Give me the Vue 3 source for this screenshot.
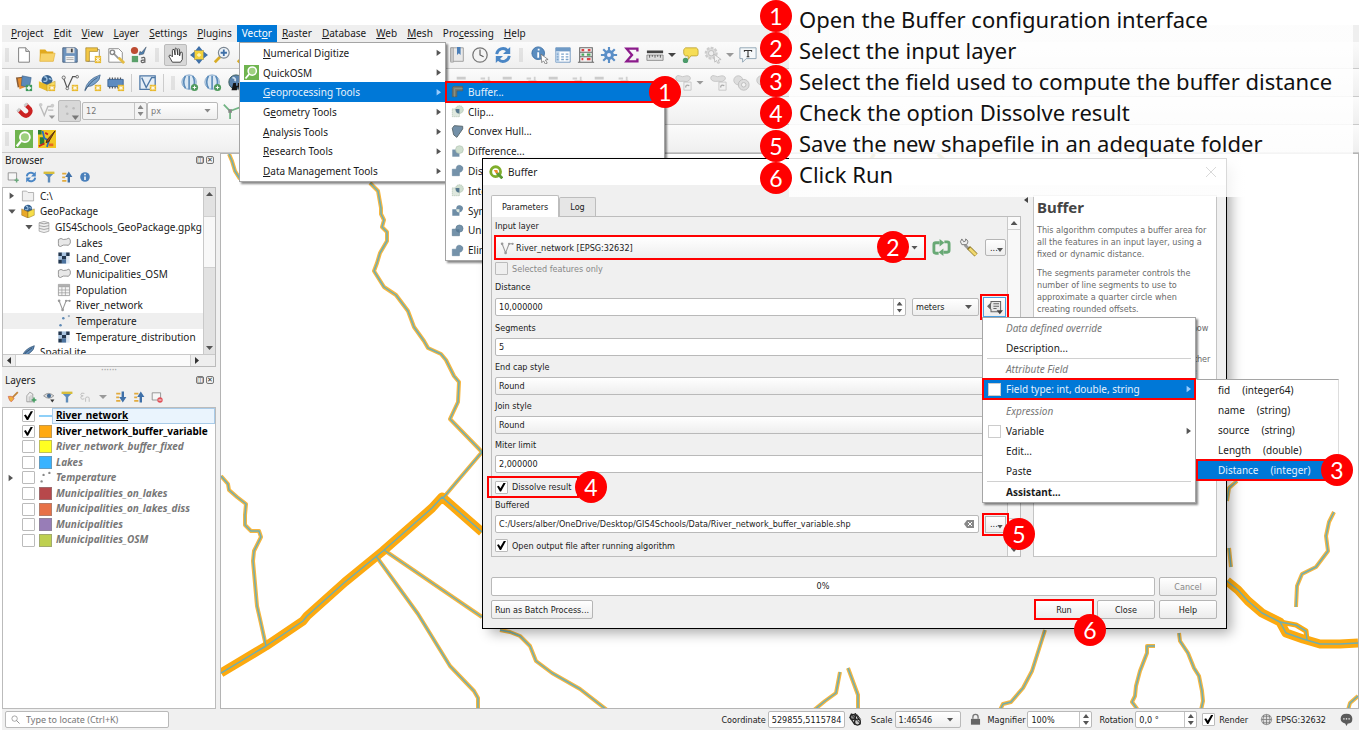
<script setup>
import { ref } from 'vue'

const menus = ['Project', 'Edit', 'View', 'Layer', 'Settings', 'Plugins', 'Vector', 'Raster', 'Database', 'Web', 'Mesh', 'Processing', 'Help']
const keyAt = { Vector: 4, Processing: 3 }
const split = (t, i = 0) => [t.slice(0, i), t[i], t.slice(i + 1)]

const vectorMenu = [
  { t: 'Numerical Digitize' },
  { t: 'QuickOSM', icon: 'osm', k: -1 },
  { t: 'Geoprocessing Tools', on: true },
  { t: 'Geometry Tools', k: 1 },
  { t: 'Analysis Tools' },
  { t: 'Research Tools' },
  { t: 'Data Management Tools' },
]
const geoMenu = [
  ['Buffer...', 'buffer'], ['Clip...', 'clip'], ['Convex Hull...', 'hull'], ['Difference...', 'diff'], ['Dissolve...', 'dissolve'],
  ['Intersection...', 'clip'], ['Symmetrical Difference...', 'sym'], ['Union...', 'union'], ['Eliminate Selected Polygons...', 'dissolve'],
]

const fileTools = ['new', 'open', 'save', 'layout', 'layoutmgr', 'style']
const sourceTools = ['addlayer', 'geopkg', 'newshape', 'feather', 'chip']
const attrTools = ['identify', 'table', 'abacus', 'gear', 'sigma']

const tree = [
  { t: 'C:\\', icon: 'folder', lvl: 0, a: 'r' },
  { t: 'GeoPackage', icon: 'geopkgs', lvl: 0, a: 'd' },
  { t: 'GIS4Schools_GeoPackage.gpkg', icon: 'db', lvl: 1, a: 'd' },
  { t: 'Lakes', icon: 'poly', lvl: 2 },
  { t: 'Land_Cover', icon: 'rasterl', lvl: 2 },
  { t: 'Municipalities_OSM', icon: 'poly', lvl: 2 },
  { t: 'Population', icon: 'tbl', lvl: 2 },
  { t: 'River_network', icon: 'line', lvl: 2 },
  { t: 'Temperature', icon: 'points', lvl: 2, on: true },
  { t: 'Temperature_distribution', icon: 'rasterl', lvl: 2 },
  { t: 'SpatiaLite', icon: 'quill', lvl: 0 },
]

const layers = ref([
  { t: 'River_network', sw: 'river', on: true, cur: true },
  { t: 'River_network_buffer_variable', sw: 'c1', on: true },
  { t: 'River_network_buffer_fixed', sw: 'c2' },
  { t: 'Lakes', sw: 'c3' },
  { t: 'Temperature', sw: 'pts', exp: true },
  { t: 'Municipalities_on_lakes', sw: 'c4' },
  { t: 'Municipalities_on_lakes_diss', sw: 'c5' },
  { t: 'Municipalities', sw: 'c6' },
  { t: 'Municipalities_OSM', sw: 'c7' },
])

const steps = [
  'Open the Buffer configuration interface',
  'Select the input layer',
  'Select the field used to compute the buffer distance',
  'Check the option Dissolve result',
  'Save the new shapefile in an adequate folder',
  'Click Run',
]
const fields = [['fid', 'integer64'], ['name', 'string'], ['source', 'string'], ['Length', 'double'], ['Distance', 'integer']]

const thin = [
  '229,153 232,160 235,170 240,178',
  '370,182 378,190 381,207 381,213 384,219 382,226 387,231 387,240 380,252 377,262 374,270 384,286 396,294 408,310 414,326 424,340 428,347 441,353 446,359 454,375 459,381 458,401 450,418 482,451 443,497',
  '384,549 482,616',
  '376,555 418,613 450,665 474,690 478,697 478,709',
  '221,475 228,483 229,489 237,496 246,503 245,514 245,524 251,530 259,530 261,536 254,550 253,560 257,605 260,618 266,645',
  '500,629 510,631 520,635 530,645 536,660 552,672 580,688 607,709',
  '840,671 836,692 825,700 814,709',
  '848,667 858,694 858,709',
  '1045,629 1032,670 1023,687 1011,701 1003,703 1000,709',
  '1155,645 1147,645 1147,652 1140,670 1136,685 1135,695 1132,701 1138,709',
  '1179,632 1180,640 1188,652 1194,667 1199,675 1202,690 1203,700 1201,709',
  '1358,695 1350,702 1348,709',
  '1227,500 1229,487 1237,480',
  '1229,547 1231,566',
  '1334,511 1329,521 1326,535 1328,550 1316,566 1302,573 1297,585 1296,606',
  '874,153 870,160',
  '938,153 944,159',
  '1144,153 1138,160',
]
const thick = [
  '221,672 266,645 303,620 307,615 345,581 383,550 432,507 442,496 482,531',
  '1227,580 1238,589 1248,600 1262,612 1280,621 1286,632 1303,638 1320,643 1340,643 1358,642',
]
const loop = '1280,621 1296,624 1306,630 1307,639'
const selected = ref(false)
const dissolve = ref(true)
const openAfter = ref(true)
const render = ref(true)
</script>

<template>
  <div class="desk">
    <svg class="defs" aria-hidden="true">
      <symbol id="new" viewBox="0 0 20 20"><path d="M4 2h8l4 4v12H4z" fill="#fff" stroke="#777" /><path d="M12 2v4h4" fill="#ddd" stroke="#777" /></symbol>
      <symbol id="open" viewBox="0 0 20 20"><path d="M2 4h6l2 2h7v11H2z" fill="#e2aa1e" /><path d="M3 8h16l-2 9H2z" fill="#f7d36a" stroke="#e0ac2c" stroke-width=".6" /></symbol>
      <symbol id="save" viewBox="0 0 20 20"><path d="M2 2h14l2 2v14H2z" fill="#6d93bd" stroke="#49607c" /><path d="M6 2h9v6H6z" fill="#ddd" /><path d="M11 3h2v4h-2z" fill="#444" /><path d="M5 11h10v7H5z" fill="#f4f4f4" /><path d="M6 13h8M6 15h8" stroke="#aaa" /></symbol>
      <symbol id="layout" viewBox="0 0 20 20"><path d="M4 4h13v13H4z" fill="#fff" stroke="#888" /><path d="M2 2h13v4H6v11H2z" fill="#f3c745" stroke="#9b7b1f" stroke-width=".7" /><path d="M12 11h7v8h-7z" fill="#e8b92c" /><path d="M15.500 12v6M13 13l5 4M18 13l-5 4" stroke="#fff" /></symbol>
      <symbol id="layoutmgr" viewBox="0 0 20 20"><path d="M2 3h11l4 4v11H2z" fill="#fff" stroke="#888" /><path d="M7 8l6 6" stroke="#999" stroke-width="2" /><path d="M13 13l6 6" stroke="#e3bc45" stroke-width="3" /><circle cx="6" cy="7" r="2.500" fill="none" stroke="#888" stroke-width="1.500" /></symbol>
      <symbol id="style" viewBox="0 0 20 20"><circle cx="5" cy="5" r="4" fill="#bd4b32" /><path d="M2 11h7v7H2z" fill="#5aa06a" /><path d="M18 1l-5 6-2-1-1 4 5-1z" fill="#4f7fad" stroke="#345" stroke-width=".5" /><path d="M12.500 13.500q4-2 4 1v4m0-3q-5 0-4 2t4 0" fill="none" stroke="#666" stroke-width="1.400" /></symbol>
      <symbol id="hand" viewBox="0 0 20 20"><path d="M6 18l-4-7q1-2 3 0l1 1V5q0-2 2-1l1 6V3q1-2 2 0l1 7V4q1-2 2 0v7l1-4q2-1 2 1v7l-2 3z" fill="#fff" stroke="#333" /></symbol>
      <symbol id="pan" viewBox="0 0 20 20"><path d="M5 5h10v10H5z" fill="#f3d13b" stroke="#a98b19" stroke-width=".6" /><path d="M10 0l4 5H6zM10 20l4-5H6zM0 10l5-4v8zM20 10l-5-4v8z" fill="#3f70a8" /><path d="M8 10h4M10 8v4" stroke="#fff5b0" stroke-width="2" /></symbol>
      <symbol id="zoomin" viewBox="0 0 20 20"><path d="M8 12l-6 6" stroke="#d8ac25" stroke-width="3" /><circle cx="12" cy="7.500" r="6" fill="#eef3f8" stroke="#7c8792" stroke-width="1.300" /><path d="M12 4v7M8.500 7.500h7" stroke="#3f70a8" stroke-width="2" /></symbol>
      <symbol id="bookmark" viewBox="0 0 20 20"><path d="M3 2h14v15H3z" fill="#e9e9e9" stroke="#999" /><path d="M3 2h3v16H3z" fill="#ccc" stroke="#999" stroke-width=".7" /><path d="M10 1h4v9l-2-2-2 2z" fill="#4b7fb8" /></symbol>
      <symbol id="clock" viewBox="0 0 20 20"><circle cx="10" cy="10" r="8" fill="#f4f4f4" stroke="#777" stroke-width="1.400" /><path d="M10 4v6l4 2" fill="none" stroke="#555" stroke-width="1.200" /></symbol>
      <symbol id="refresh" viewBox="0 0 20 20"><path d="M3 9a7 7 0 0112-4M17 11a7 7 0 01-12 4" fill="none" stroke="#4a86c5" stroke-width="3.200" /><path d="M18 1v8h-8zM2 19v-8h8z" fill="#4a86c5" /></symbol>
      <symbol id="identify" viewBox="0 0 20 20"><circle cx="8" cy="8" r="7" fill="#5a8dc0" stroke="#3b6ea5" /><path d="M8.500 3v2M8 7v6" stroke="#fff" stroke-width="2" /><path d="M11 9l8 6-3 .5 2 3.500-2 1-2-3.500-2 2z" fill="#fff" stroke="#666" stroke-width=".8" /></symbol>
      <symbol id="table" viewBox="0 0 20 20"><path d="M2 2h16v16H2z" fill="#fff" stroke="#6a92bd" /><path d="M2 2h16v4H2z" fill="#6f9ac6" /><path d="M2 6h4v12H2z" fill="#bcd3ea" /><path d="M8 9h3M8 12h3M8 15h3M13 9h3M13 12h3M13 15h3M3 9h2M3 12h2M3 15h2" stroke="#7ba3cb" stroke-width="1.500" /></symbol>
      <symbol id="abacus" viewBox="0 0 20 20"><path d="M3 2h14v16H3zM3 7h14M3 12h14M1 18h18" fill="none" stroke="#666" stroke-width="1.200" /><path d="M5 4.500h3M12 4.500h3" stroke="#d44" stroke-width="2.500" /><path d="M5 9.500h3M11 9.500h4" stroke="#4ba85c" stroke-width="2.500" /><path d="M5 14.500h2M11 14.500h4" stroke="#d44" stroke-width="2.500" /></symbol>
      <symbol id="gear" viewBox="0 0 20 20"><path d="M10 1v18M1 10h18M3.600 3.600l12.800 12.800M16.400 3.600L3.600 16.400" stroke="#5b8fc7" stroke-width="2.400" /><circle cx="10" cy="10" r="5.500" fill="#5b8fc7" /><circle cx="10" cy="10" r="2.200" fill="#eef" /></symbol>
      <symbol id="sigma" viewBox="0 0 20 20"><path d="M16 6V3H4l6 7-6 7h12v-3" fill="none" stroke="#8b1b8b" stroke-width="2.600" /></symbol>
      <symbol id="ruler" viewBox="0 0 20 20"><path d="M1 5h18v3H1z" fill="#444" /><path d="M1 10h18v6H1z" fill="#ddd" stroke="#777" stroke-width=".8" /><path d="M4 10v3M7 10v2M10 10v3M13 10v2M16 10v3" stroke="#555" /></symbol>
      <symbol id="balloon" viewBox="0 0 20 20"><path d="M5 2h12q2 1 2 3v4q0 2-2 2H11l-3 4v-4H5q-2-1-2-3V4z" fill="#f6dd55" stroke="#b3982a" stroke-width=".8" /><circle cx="5" cy="16" r="3" fill="#4b9a6a" /></symbol>
      <symbol id="geargrey" viewBox="0 0 20 20"><circle cx="8" cy="8" r="6" fill="#ddd" stroke="#ccc" stroke-width="2.500" stroke-dasharray="3 1.500" /><circle cx="8" cy="8" r="3" fill="#eee" stroke="#bbb" /><path d="M11 9l8 6-3 .5 1 3.500-2 0-1-3-2 2z" fill="#f4f4f4" stroke="#bbb" /></symbol>
      <symbol id="textbox" viewBox="0 0 20 20"><path d="M1 2h18v12H8l-4 4v-4H1z" fill="#f5f8fa" stroke="#8aa0b0" /><path d="M6 5h8M10 5v7M8.500 12h3M6 4.500v2M14 4.500v2" stroke="#333" stroke-width="1.200" /></symbol>
      <symbol id="addlayer" viewBox="0 0 20 20"><path d="M1 4l8-1 2 10-8 2z" fill="#8a5c35" /><path d="M3 5l9-1 1 10-8 3z" fill="#e78d2e" /><path d="M8 2l10 2-2 11-9-2z" fill="#5c89b8" stroke="#3a5b80" stroke-width=".6" /><path d="M12 12h7v7h-7z" fill="#3f9a5c" /><path d="M15.500 13v5M13 15.500h5" stroke="#fff" stroke-width="1.500" /></symbol>
      <symbol id="geopkg" viewBox="0 0 20 20"><circle cx="10" cy="7" r="6" fill="#37628f" /><path d="M7 3q3 0 3 3t-4 2M12 5l3 1" stroke="#9ec3e3" stroke-width="1.500" fill="none" /><path d="M1 8l9 4v7l-9-4z" fill="#e9bb28" /><path d="M19 8l-9 4v7l9-4z" fill="#f7de6a" stroke="#b08d1d" stroke-width=".5" /><path d="M12 12h7v7h-7z" fill="#e8b92c" /><path d="M15.500 13v5M13 14l5 3M18 14l-5 3" stroke="#fff" /></symbol>
      <symbol id="geopkgs" viewBox="0 0 20 20"><circle cx="10" cy="7" r="6" fill="#37628f" /><path d="M7 3q3 0 3 3t-4 2M12 5l3 1" stroke="#9ec3e3" stroke-width="1.500" fill="none" /><path d="M1 7l9 4v9l-9-4z" fill="#e9a928" stroke="#80611a" stroke-width=".6" /><path d="M19 7l-9 4v9l9-4z" fill="#f7de4a" stroke="#80611a" stroke-width=".6" /></symbol>
      <symbol id="newshape" viewBox="0 0 20 20"><path d="M3 5l4 11 6-13h5" fill="none" stroke="#555" stroke-width="1.300" /><circle cx="3" cy="4" r="1.800" fill="#eee" stroke="#666" /><circle cx="7" cy="16" r="1.500" fill="#eee" stroke="#666" /><circle cx="18" cy="3" r="1.500" fill="#eee" stroke="#666" /><path d="M12 12h7v7h-7z" fill="#e8b92c" /><path d="M15.500 13v5M13 14l5 3M18 14l-5 3" stroke="#fff" /></symbol>
      <symbol id="feather" viewBox="0 0 20 20"><path d="M1 18Q3 6 18 1q0 6-6 10-4 3-8 3z" fill="#7aa3cc" stroke="#3d6288" stroke-width=".8" /><path d="M1 19Q6 9 15 4" fill="none" stroke="#2c4a69" stroke-width=".8" /><path d="M12 12h7v7h-7z" fill="#e8b92c" /><path d="M15.500 13v5M13 14l5 3M18 14l-5 3" stroke="#fff" /></symbol>
      <symbol id="quill" viewBox="0 0 20 20"><path d="M1 19Q3 6 19 1q0 6-6 10-4 4-9 4z" fill="#5f8ab5" stroke="#2f4f70" /><path d="M1 19Q6 9 16 4" fill="none" stroke="#223a55" /></symbol>
      <symbol id="chip" viewBox="0 0 20 20"><path d="M3 4v12M6 4v12M9 4v12M12 4v12M15 4v12" stroke="#555" stroke-width="1.300" /><path d="M1 6h17v8H1z" fill="#5d8bc0" stroke="#3b6290" /><path d="M12 12h7v7h-7z" fill="#e8b92c" /><path d="M15.500 13v5M13 14l5 3M18 14l-5 3" stroke="#fff" /></symbol>
      <symbol id="virtual" viewBox="0 0 20 20"><path d="M1 2h17v15H1z" fill="#e5eef7" stroke="#4d77a5" stroke-width="1.400" /><path d="M3 4l5 11 6-11h4" fill="none" stroke="#4d77a5" stroke-width="1.500" /><path d="M12 12h7v7h-7z" fill="#e8b92c" /><path d="M15.500 13v5M13 14l5 3M18 14l-5 3" stroke="#fff" /></symbol>
      <symbol id="globe" viewBox="0 0 20 20"><circle cx="9" cy="9" r="8" fill="#dbe8f3" stroke="#7da3c8" stroke-width="1" /><path d="M5 2q-4 7 0 14M9 2v15M13 2q4 7 0 14" fill="none" stroke="#5b8bb9" stroke-width="1.800" /><circle cx="15" cy="15" r="4" fill="#4f9a5d" /><path d="M13 15h4M15 13v4" stroke="#fff" /></symbol>
      <symbol id="binoc" viewBox="0 0 20 20"><circle cx="10" cy="9" r="8" fill="#5b83ad" stroke="#355" /><path d="M6 4q4 0 3 4" stroke="#cfe0ef" stroke-width="2" fill="none" /><path d="M5 18l2-8h3v3h2v-3h3l3 8h-5v-3h-2v3z" fill="#151515" /></symbol>
      <symbol id="magnet" viewBox="0 0 20 20"><path d="M4 9l5 5q4 3 7-1t-1-7l-3-3" fill="none" stroke="#cb2222" stroke-width="4.500" /><path d="M2.500 10.500l3-3M10.500 4.500l3-3" stroke="#ccc" stroke-width="3" /></symbol>
      <symbol id="snapv" viewBox="0 0 20 20"><path d="M2 3l5 12 4-10h6M11 9h6" fill="none" stroke="#bbb" stroke-width="1.500" /><circle cx="3" cy="3" r="2" fill="#ccc" /><circle cx="16" cy="4" r="2" fill="#ccc" /><path d="M12 15h7l-3.500 4z" fill="#999" /></symbol>
      <symbol id="dots" viewBox="0 0 20 20"><circle cx="6" cy="5" r="1.400" fill="#bbb" /><circle cx="14" cy="7" r="1.400" fill="#bbb" /><circle cx="7" cy="13" r="1.400" fill="#bbb" /><path d="M12 15h8l-4 5z" fill="#777" /></symbol>
      <symbol id="topo" viewBox="0 0 20 20"><path d="M2 3l7 7v9M9 10l11-4" fill="none" stroke="#71b483" stroke-width="2" /><path d="M7 8h4v4H7z" fill="#888" /></symbol>
      <symbol id="osm" viewBox="0 0 20 20"><path d="M0 0h20v20H0z" fill="#6fb44f" /><circle cx="11" cy="8" r="5.500" fill="#9ed07f" stroke="#fff" stroke-width="2" /><path d="M7 12l-5 6" stroke="#fff" stroke-width="2.500" /></symbol>
      <symbol id="osm2" viewBox="0 0 20 20"><path d="M0 0h20v20H0z" fill="#f1c722" /><path d="M0 0h4v5H0zM2 8h5v8H2z" fill="#2a7d36" /><path d="M5 1l2 8 5 3-2 7" stroke="#2870bd" stroke-width="2" fill="none" /><path d="M1 18l6-3M8 3l3 2" stroke="#c22" stroke-width="2" /><path d="M19 1l-9 10-1 3 3-1z" fill="#8d4a1f" stroke="#4f2810" /><path d="M12 15h5v3h-5z" fill="#e66a1f" /></symbol>
      <symbol id="edit1" viewBox="0 0 20 20"><path d="M3 3h10v3H3zM3 8h14v2H3z" fill="#ccc" /></symbol>
      <symbol id="edit2" viewBox="0 0 20 20"><path d="M4 5h5M6 8h9M13 3v7" stroke="#d0d0d0" stroke-width="2" /></symbol>
      <symbol id="shape" viewBox="0 0 20 20"><path d="M2 5q0-4 4-3 3 2 8 0 5 0 4 4-3 4-8 2-7 1-8-3z" fill="#ddd" stroke="#c4c4c4" /><path d="M11 9h8v9h-8z" fill="#f2f2f2" stroke="#c6c6c6" /><path d="M13 15q0-4 4-2" fill="none" stroke="#aaa" stroke-width="1.500" /></symbol>
      <symbol id="shape2" viewBox="0 0 20 20"><circle cx="7" cy="7" r="5" fill="#ddd" stroke="#c4c4c4" /><circle cx="13" cy="12" r="6" fill="#ddd" stroke="#bdbdbd" /><circle cx="13" cy="12" r="2.500" fill="#f2f2f2" stroke="#bbb" /></symbol>
      <symbol id="buffer" viewBox="0 0 20 20"><path d="M2 18V5q0-3 3-3h13v7H9v9z" fill="#75786c" stroke="#5a5d55" /><path d="M5.500 18V5.500H18" stroke="#94a090" fill="none" /></symbol>
      <symbol id="clip" viewBox="0 0 20 20"><path d="M2 6h11v12H2z" fill="#dfe8df" stroke="#a9bba9" stroke-dasharray="2 1" /><circle cx="13" cy="7" r="6" fill="#d0dfd0" stroke="#a9bba9" stroke-dasharray="2 1" /><path d="M7 6h6v7q-6 0-6-7z" fill="#56788f" /></symbol>
      <symbol id="hull" viewBox="0 0 20 20"><path d="M2 5l3-4 13 1v4L9 19 4 15z" fill="#7390a8" stroke="#5c6a70" stroke-width="1.500" /></symbol>
      <symbol id="diff" viewBox="0 0 20 20"><path d="M2 7h11v11H2z" fill="#7492aa" /><circle cx="13" cy="7" r="6" fill="#cfdfcf" stroke="#a9bba9" stroke-width=".8" /></symbol>
      <symbol id="dissolve" viewBox="0 0 20 20"><path d="M2 8h6q0-7 6-6 6 2 4 7-1 3-5 4v5H2z" fill="#7492aa" stroke="#5f7f98" stroke-width=".8" /></symbol>
      <symbol id="sym" viewBox="0 0 20 20"><path d="M2 8h6q0-7 6-6 6 2 4 7-1 3-5 4v5H2z" fill="#6e8da6" /><path d="M8 8h5v5q-5 0-5-5z" fill="#e1ebe1" /></symbol>
      <symbol id="union" viewBox="0 0 20 20"><path d="M2 8h11v10H2z" fill="#7492aa" stroke="#5a7890" /><circle cx="13" cy="7" r="5.500" fill="#7492aa" stroke="#5a7890" /><path d="M8 8h5v5q-5 0-5-5z" fill="#597b96" /></symbol>
      <symbol id="folder" viewBox="0 0 20 20"><path d="M2 3h6l2 2h8v12H2z" fill="#f0f0f0" stroke="#999" /></symbol>
      <symbol id="db" viewBox="0 0 20 20"><path d="M3 4q7-4 14 0v12q-7 4-14 0z" fill="#eee" stroke="#999" /><path d="M3 4q7 3 14 0M3 8q7 3 14 0M3 12q7 3 14 0" fill="none" stroke="#999" stroke-width="1.200" /></symbol>
      <symbol id="poly" viewBox="0 0 20 20"><path d="M2 5q4-3 7 0 5 0 8-2 3 2 2 7-2 5-6 3-4-1-8 2-4 0-3-4z" fill="#e8e8e8" stroke="#888" stroke-width="1.200" /></symbol>
      <symbol id="rasterl" viewBox="0 0 20 20"><path d="M2 2h16v16H2z" fill="#dfe9f4" /><path d="M2 2h5v5H2zM7 7h6v5H7zM13 2h5v5h-5zM2 12h5v6H2z" fill="#22364e" /><path d="M7 2h6v5H7zM2 7h5v5H2z" fill="#a9c4e0" /><path d="M7 12h6v6H7z" fill="#4d74a0" /></symbol>
      <symbol id="tbl" viewBox="0 0 20 20"><path d="M2 2h16v16H2z" fill="#f5f5f5" stroke="#888" /><path d="M2 3h16v3H2z" fill="#aaa" /><path d="M2 10h16M2 14h16M7 6v12M12 6v12" stroke="#999" /></symbol>
      <symbol id="line" viewBox="0 0 20 20"><path d="M3 4l5 13 5-13h5" fill="none" stroke="#999" stroke-width="1.500" /><circle cx="3" cy="4" r="1.900" fill="#999" /><circle cx="8" cy="17" r="1.900" fill="#999" /><circle cx="13" cy="4" r="1.600" fill="#999" /><circle cx="18" cy="4" r="1.600" fill="#999" /></symbol>
      <symbol id="points" viewBox="0 0 20 20"><circle cx="5" cy="16" r="1.800" fill="#5f8ab5" /><circle cx="9" cy="6" r="1.800" fill="#5f8ab5" /><circle cx="17" cy="3" r="1.600" fill="#9ab" /></symbol>
      <symbol id="pts" viewBox="0 0 20 20"><circle cx="4" cy="16" r="1.800" fill="#888" /><circle cx="7" cy="6" r="1.800" fill="#888" /><circle cx="16" cy="3" r="1.800" fill="#888" /></symbol>
      <symbol id="addsq" viewBox="0 0 20 20"><path d="M2 3h14v12H2z" fill="#f6f6f6" stroke="#888" stroke-width="1.400" /><path d="M16 12v7M12.500 15.500h7" stroke="#6aa87c" stroke-width="2.500" /></symbol>
      <symbol id="delsq" viewBox="0 0 20 20"><path d="M2 3h14v12H2z" fill="#f6f6f6" stroke="#888" stroke-width="1.400" /><circle cx="15" cy="15" r="4.500" fill="#e0525a" /><path d="M12.500 15h5" stroke="#fff" stroke-width="1.500" /></symbol>
      <symbol id="funnel" viewBox="0 0 20 20"><path d="M1 3h18l-7 7v9H8v-9z" fill="#5e8cba" /><path d="M1 1h18v4H1z" fill="#d7bd3b" /></symbol>
      <symbol id="collapse" viewBox="0 0 20 20"><path d="M2 3h7v3H2zM2 9h5v3H2zM2 15h7v3H2z" fill="#e2aa3c" /><path d="M11 19V10H7l6-9 6 9h-4v9z" fill="#3f70a8" /></symbol>
      <symbol id="expand" viewBox="0 0 20 20"><path d="M2 3h7v3H2zM2 9h5v3H2zM2 15h7v3H2z" fill="#e2aa3c" /><path d="M11 1v9H7l6 9 6-9h-4V1z" fill="#3f70a8" /></symbol>
      <symbol id="info" viewBox="0 0 20 20"><circle cx="10" cy="10" r="8" fill="#4a80bb" /><path d="M10 4.500v2.500M10 9v6" stroke="#fff" stroke-width="2.500" /></symbol>
      <symbol id="brush" viewBox="0 0 20 20"><path d="M18 2l-9 9" stroke="#c0843a" stroke-width="3" /><path d="M2 9q5-2 10 3-2 4-5 6-3-1-5-9z" fill="#f0b13c" stroke="#c55" /></symbol>
      <symbol id="grp" viewBox="0 0 20 20"><path d="M3 18V8l5-6 5 3v13z" fill="#eee" stroke="#777" /><path d="M7 18V9M10 18V7" stroke="#999" /><path d="M15 11v8M11 15h8" stroke="#3f9a5c" stroke-width="2.500" /></symbol>
      <symbol id="eye" viewBox="0 0 20 20"><path d="M1 8q8-8 17 0-8 8-17 0z" fill="#ddd" stroke="#666" /><circle cx="10" cy="8" r="3.500" fill="#456a91" /><path d="M12 14h7l-3.500 5z" fill="#333" /></symbol>
      <symbol id="eps" viewBox="0 0 20 20"><path d="M9 4q-6-2-6 2 0 2 4 2-5 0-4 4 1 3 6 1M11 18v-6q0-2 3-2t3 2v6" fill="none" stroke="#bbb" stroke-width="1.500" /></symbol>
      <symbol id="iterate" viewBox="0 0 20 20"><path d="M7 16H4q-2 0-2-2V7q0-2 2-2h4M13 4h3q2 0 2 2v7q0 2-2 2h-4" fill="none" stroke="#68a975" stroke-width="3" /><path d="M8 1l5 4-5 4zM12 11l-5 4 5 4z" fill="#68a975" /></symbol>
      <symbol id="wrench" viewBox="0 0 20 20"><path d="M6 7l5 5" stroke="#999" stroke-width="3" /><path d="M3 7q-3-3 0-6l2 3 2-1 0-2q4 2 1 6z" fill="#eee" stroke="#777" /><path d="M10 10l8 8" stroke="#8c7628" stroke-width="4.500" /><path d="M11 11l7 7" stroke="#f0d870" stroke-width="3" /></symbol>
      <symbol id="override" viewBox="0 0 20 20"><path d="M5 3h12v13H5v-3L1 9l4-4z" fill="#e6e6e6" stroke="#666" stroke-width="1.300" /><path d="M5 5v8L1 9z" fill="#666" /><path d="M8 6h7M8 9h7M8 12h4" stroke="#666" stroke-width="1.300" /><path d="M12 14h8l-4 5z" fill="#444" /></symbol>
      <symbol id="qgis" viewBox="0 0 20 20"><circle cx="9.500" cy="9.500" r="7" fill="none" stroke="#7fae2b" stroke-width="4" /><path d="M11 11l8 8" stroke="#5b9a33" stroke-width="4" /><path d="M7 7h5l1 5-4-1z" fill="#ee8a2c" /></symbol>
      <symbol id="mouse" viewBox="0 0 20 20"><path d="M3 1l14 17M9 0l8 12M1 6l8 12" stroke="#222" stroke-width="2" /><circle cx="6" cy="6" r="4" fill="#888" stroke="#222" stroke-width="2" /><circle cx="13" cy="14" r="4.500" fill="#ccc" stroke="#222" stroke-width="2" /><path d="M4 3l14 14M12 2l6 8" stroke="#222" stroke-width="1.500" /></symbol>
      <symbol id="lock" viewBox="0 0 20 20"><path d="M6 9V6q0-4 4-4t4 4v3" fill="none" stroke="#777" stroke-width="2" /><path d="M3 9h14v9H3z" fill="#666" /></symbol>
      <symbol id="world" viewBox="0 0 20 20"><circle cx="10" cy="10" r="8" fill="#ddd" stroke="#777" /><path d="M10 2v16M2 10h16M4 5h12M4 15h12M6 3q-3 7 0 14M14 3q3 7 0 14" fill="none" stroke="#777" stroke-width="1.200" /></symbol>
      <symbol id="chat" viewBox="0 0 20 20"><path d="M1 9q0-8 9-8t9 8-7 7l-2 4-2-4q-7-1-7-7z" fill="#5b5b5b" /><path d="M5 9h2M9 9h2M13 9h2" stroke="#fff" stroke-width="2" /></symbol>
      <symbol id="search" viewBox="0 0 20 20"><circle cx="8" cy="8" r="6" fill="none" stroke="#888" stroke-width="1.600" /><path d="M12 12l7 7" stroke="#888" stroke-width="2" /></symbol>
    </svg>

    <div class="app">
      <nav class="menubar">
        <button v-for="m in menus" :key="m" :class="{ on: m === 'Vector' }">{{ split(m, keyAt[m])[0] }}<u>{{ split(m, keyAt[m])[1] }}</u>{{ split(m, keyAt[m])[2] }}</button>
      </nav>

      <div class="bar first">
        <i class="grip"></i>
        <button v-for="n in fileTools" :key="n" class="tool" :aria-label="n"><svg><use :href="'#' + n" /></svg></button>
        <i class="grip wide"></i>
        <button class="tool down" aria-label="Pan"><svg><use href="#hand" /></svg></button>
        <button class="tool" aria-label="Pan to selection"><svg><use href="#pan" /></svg></button>
        <button class="tool" aria-label="Zoom in"><svg><use href="#zoomin" /></svg></button>
        <button class="tool" aria-label="Zoom out"><svg><use href="#zoomin" /></svg></button>
        <span class="under1"></span>
        <button class="tool" aria-label="Bookmarks"><svg><use href="#bookmark" /></svg></button>
        <button class="tool" aria-label="Temporal"><svg><use href="#clock" /></svg></button>
        <button class="tool" aria-label="Refresh"><svg><use href="#refresh" /></svg></button>
        <i class="grip wide"></i>
        <button v-for="n in attrTools" :key="n" class="tool" :aria-label="n"><svg><use :href="'#' + n" /></svg></button>
        <button class="tool" aria-label="Measure"><svg><use href="#ruler" /></svg></button>
        <i class="dd"></i>
        <button class="tool" aria-label="Map tips"><svg><use href="#balloon" /></svg></button>
        <button class="tool" aria-label="Actions"><svg><use href="#geargrey" /></svg></button>
        <i class="dd pale"></i>
        <button class="tool" aria-label="Annotation"><svg><use href="#textbox" /></svg></button>
      </div>
      <div class="bar">
        <i class="grip"></i>
        <button v-for="n in sourceTools" :key="n" class="tool" :aria-label="n"><svg><use :href="'#' + n" /></svg></button>
        <i class="vsep"></i>
        <button class="tool" aria-label="Virtual layer"><svg><use href="#virtual" /></svg></button>
        <i class="vsep"></i>
        <i class="grip"></i>
        <button class="tool" aria-label="Add service"><svg><use href="#globe" /></svg></button>
        <button class="tool" aria-label="Search service"><svg><use href="#globe" /></svg></button>
        <button class="tool" aria-label="Metasearch"><svg><use href="#binoc" /></svg></button>
        <span class="under2"></span>
        <button v-for="n in 8" :key="n" class="tool" :aria-label="'Edit ' + n"><svg><use :href="n % 2 ? '#edit1' : '#edit2'" /></svg></button>
        <span class="under3"></span>
        <button class="tool" aria-label="Move"><svg><use href="#shape" /></svg></button>
        <i class="dd pale"></i>
        <button class="tool" aria-label="Rotate"><svg><use href="#shape" /></svg></button>
        <button class="tool" aria-label="Simplify"><svg><use href="#shape2" /></svg></button>
        <button class="tool" aria-label="Add ring"><svg><use href="#shape2" /></svg></button>
      </div>
      <div class="bar">
        <i class="grip"></i>
        <button class="tool" aria-label="Snapping"><svg><use href="#magnet" /></svg></button>
        <button class="tool" aria-label="Snap mode"><svg><use href="#snapv" /></svg></button>
        <button class="tool down" aria-label="Snap type"><svg><use href="#dots" /></svg></button>
        <span class="field spin snap"><input value="12" aria-label="Snapping tolerance" /><i class="arrows"></i></span>
        <span class="field combo unit"><select aria-label="Unit"><option>px</option></select><i class="tri"></i></span>
        <button class="tool" aria-label="Topological editing"><svg><use href="#topo" /></svg></button>
      </div>
      <div class="bar">
        <i class="grip"></i>
        <button class="tool" aria-label="QuickOSM"><svg><use href="#osm" /></svg></button>
        <button class="tool" aria-label="OSM style"><svg><use href="#osm2" /></svg></button>
      </div>

      <div class="body">
        <aside class="dock">
          <header><h2>Browser</h2><i class="win">◫</i><i class="win">✕</i></header>
          <div class="ptools">
            <svg v-for="n in ['addsq', 'refresh', 'funnel', 'collapse', 'info']" :key="n"><use :href="'#' + n" /></svg>
          </div>
          <div class="treebox">
            <ul class="tree">
              <li v-for="r in tree" :key="r.t" :class="['l' + r.lvl, { on: r.on }]">
                <i class="arrow" :class="r.a"></i><svg><use :href="'#' + r.icon" /></svg><span>{{ r.t }}</span>
              </li>
            </ul>
            <div class="vs"><i class="up"></i><b></b><i class="dn"></i></div>
            <div class="hs"><i class="lf"></i><b></b><i class="rt"></i></div>
          </div>
          <div class="hgrip">······</div>
          <header><h2>Layers</h2><i class="win">◫</i><i class="win">✕</i></header>
          <div class="ptools">
            <svg v-for="n in ['brush', 'grp', 'eye', 'funnel', 'eps']" :key="n"><use :href="'#' + n" /></svg>
            <i class="dd pale"></i>
            <svg v-for="n in ['expand', 'collapse', 'delsq']" :key="n"><use :href="'#' + n" /></svg>
          </div>
          <div class="layerbox">
            <ul class="layers">
              <li v-for="l in layers" :key="l.t" :class="{ lit: l.on, cur: l.cur }">
                <i class="arrow" :class="{ r: l.exp }"></i>
                <input v-model="l.on" type="checkbox" :aria-label="l.t" />
                <svg v-if="l.sw === 'pts'" class="sw"><use href="#pts" /></svg>
                <i v-else class="sw" :class="l.sw"></i>
                <span>{{ l.t }}</span>
              </li>
            </ul>
          </div>
        </aside>
        <main class="map">
          <svg>
            <g transform="translate(-221 -153)" fill="none" stroke-linejoin="round">
              <polyline v-for="p in thin" :key="p" :points="p" stroke="#f6b640" stroke-width="4" />
              <polyline v-for="p in thick" :key="p" :points="p" stroke="#fca90f" stroke-width="9" />
              <polyline :points="loop" stroke="#fca90f" stroke-width="5" />
              <polyline v-for="p in thin.concat(thick, loop)" :key="'b' + p" :points="p" stroke="#6faeb0" stroke-width="1.500" />
            </g>
          </svg>
        </main>
      </div>

      <footer class="status">
        <label class="field locate"><svg><use href="#search" /></svg><input placeholder="Type to locate (Ctrl+K)" aria-label="Locate" /></label>
        <span class="push"></span>
        <label for="coord">Coordinate</label><span class="field coord"><input id="coord" value="529855,5115784" /></span>
        <svg class="sic"><use href="#mouse" /></svg>
        <label for="scale">Scale</label><span class="field combo scale"><select id="scale"><option>1:46546</option></select><i class="tri"></i></span>
        <svg class="sic lock"><use href="#lock" /></svg>
        <label for="mag">Magnifier</label><span class="field spin mag"><input id="mag" value="100%" /><i class="arrows"></i></span>
        <label for="rot">Rotation</label><span class="field spin rot"><input id="rot" value="0,0 °" /><i class="arrows"></i></span>
        <label class="ck"><input v-model="render" type="checkbox" />Render</label>
        <span class="crs"><svg class="sic"><use href="#world" /></svg>EPSG:32632</span>
        <svg class="sic"><use href="#chat" /></svg>
      </footer>
    </div>

    <nav class="menu vector">
      <button v-for="m in vectorMenu" :key="m.t" :class="{ on: m.on }">
        <svg v-if="m.icon"><use :href="'#' + m.icon" /></svg>
        <span v-if="m.k === -1">{{ m.t }}</span>
        <span v-else>{{ split(m.t, m.k)[0] }}<u>{{ split(m.t, m.k)[1] }}</u>{{ split(m.t, m.k)[2] }}</span>
        <i class="arrow r"></i>
      </button>
    </nav>
    <nav class="menu geo">
      <button v-for="(m, i) in geoMenu" :key="m[0]" :class="{ on: !i, mark: !i }">
        <svg><use :href="'#' + m[1]" /></svg><span>{{ m[0] }}</span><b v-if="!i" class="badge">1</b>
      </button>
    </nav>

    <section class="dialog" role="dialog" aria-label="Buffer">
      <header class="title"><svg><use href="#qgis" /></svg><span>Buffer</span><button aria-label="Close window"><svg viewBox="0 0 10 10"><path d="M0 0l10 10M10 0L0 10" stroke="#000" fill="none" /></svg></button></header>
      <div class="cols">
        <div class="left">
          <div class="tabs"><button class="on">Parameters</button><button>Log</button></div>
          <div class="pane">
            <form class="form" @submit.prevent>
              <label class="lb" for="inp">Input layer</label>
              <div class="row input">
                <span class="field combo mark grow"><svg><use href="#line" /></svg><select id="inp"><option>River_network [EPSG:32632]</option></select><b class="badge">2</b><i class="tri"></i></span>
                <svg class="ric"><use href="#iterate" /></svg>
                <svg class="ric"><use href="#wrench" /></svg>
                <button class="more" aria-label="Browse input">...<i class="tri"></i></button>
              </div>
              <label class="ck off"><input v-model="selected" type="checkbox" disabled />Selected features only</label>
              <label class="lb" for="dist">Distance</label>
              <div class="row">
                <span class="field spin grow"><input id="dist" value="10,000000" /><i class="arrows"></i></span>
                <span class="field combo meters"><select aria-label="Distance unit"><option>meters</option></select><i class="tri"></i></span>
                <button class="more mark ov" aria-label="Data defined override"><svg><use href="#override" /></svg></button>
              </div>
              <label class="lb seg" for="seg">Segments</label>
              <span class="field"><input id="seg" value="5" /></span>
              <label class="lb" for="cap">End cap style</label>
              <span class="field combo"><select id="cap"><option>Round</option></select></span>
              <label class="lb" for="join">Join style</label>
              <span class="field combo"><select id="join"><option>Round</option></select></span>
              <label class="lb" for="miter">Miter limit</label>
              <span class="field"><input id="miter" value="2,000000" /></span>
              <label class="ck mark dis"><input v-model="dissolve" type="checkbox" />Dissolve result<b class="badge">4</b></label>
              <label class="lb" for="out">Buffered</label>
              <div class="row">
                <span class="field grow"><input id="out" value="C:/Users/alber/OneDrive/Desktop/GIS4Schools/Data/River_network_buffer_variable.shp" />
                  <svg class="clear" viewBox="0 0 10 8"><path d="M3 0h7v8H3L0 4z" fill="#888" /><path d="M4 2l4 4M8 2L4 6" stroke="#fff" /></svg>
                </span>
                <button class="more mark" aria-label="Browse output">...<i class="tri"></i><b class="badge">5</b></button>
              </div>
              <label class="ck"><input v-model="openAfter" type="checkbox" />Open output file after running algorithm</label>
            </form>
            <div class="vs tall"><i class="up"></i><b></b><i class="dn"></i></div>
          </div>
        </div>
        <i class="fold"></i>
        <article class="help">
          <h1>Buffer</h1>
          <p>This algorithm computes a buffer area for<br />all the features in an input layer, using a<br />fixed or dynamic distance.</p>
          <p>The segments parameter controls the<br />number of line segments to use to<br />approximate a quarter circle when<br />creating rounded offsets.</p>
          <p>The end cap style parameter controls how<br />line endings are handled in the buffer.</p>
          <p>The join style parameter specifies whether<br />round, miter or beveled joins should be<br />used when offsetting corners in a line.</p>
        </article>
      </div>
      <div class="actions">
        <div class="progress" role="progressbar" aria-valuenow="0">0%</div>
        <button class="btn" disabled>Cancel</button>
        <div class="line2">
          <button class="btn auto">Run as Batch Process...</button>
          <span class="push"></span>
          <button class="btn run mark">Run<b class="badge">6</b></button>
          <button class="btn">Close</button>
        </div>
        <button class="btn">Help</button>
      </div>
    </section>

    <nav class="menu ctx">
      <em>Data defined override</em>
      <button><span>Description...</span></button>
      <hr />
      <em>Attribute Field</em>
      <button class="on mark"><i class="box"></i><span>Field type: int, double, string</span><i class="arrow r"></i></button>
      <em class="gap">Expression</em>
      <button><i class="box"></i><span>Variable</span><i class="arrow r"></i></button>
      <button><span>Edit...</span></button>
      <button><span>Paste</span></button>
      <hr />
      <button class="strong"><span>Assistant...</span></button>
    </nav>
    <nav class="menu sub">
      <button v-for="(f, i) in fields" :key="f[0]" :class="{ on: i === 4, mark: i === 4 }"><span>{{ f[0] }}</span><span>({{ f[1] }})</span><b v-if="i === 4" class="badge">3</b></button>
    </nav>

    <section class="legend">
      <div class="nums"><b v-for="(s, i) in steps" :key="s">{{ i + 1 }}</b></div>
      <div class="texts"><p v-for="s in steps" :key="s">{{ s }}</p></div>
    </section>
  </div>
</template>

<style>
body { background: #fff; }
</style>

<style scoped>
* { box-sizing: border-box; }
.desk {
  position: relative; display: flex; min-height: 100vh; padding: 25px 9px 10px 2px; overflow: hidden;
  font: 10px/14px "Noto Sans", "Open Sans", sans-serif; color: #1a1a1a;
}
.defs { position: absolute; width: 0; height: 0; }
button, input, select { margin: 0; padding: 0; border: 0; background: none; font: inherit; color: inherit; min-width: 0; }
select { appearance: none; }
ul { list-style: none; margin: 0; padding: 0; }
h1, h2, p { margin: 0; }
i { font-style: normal; }
.app { flex: 1; display: flex; flex-direction: column; background: #f0f0f0; min-width: 0; }
.menubar { display: flex; height: 17px; padding-left: 4px; background: #efefef; }
.menubar button { padding: 0 5px; line-height: 17px; }
.menubar .on { background: #0078d7; color: #fff; }
.bar { display: flex; align-items: center; height: 28px; border-bottom: 1px solid #c9c9c9; background: linear-gradient(#fbfbfb, #efefef); flex: none; }
.bar.first { height: 27px; }
.bar .tool { flex: none; width: 23px; height: 22px; display: grid; place-items: center; }
.tool svg { width: 18px; height: 18px; }
.tool.down { background: #d8d8d8; border: 1px solid #bbb; border-radius: 2px; }
.grip { flex: none; width: 4px; height: 14px; margin: 0 3px; background: radial-gradient(circle, #c4c4c4 0 1px, transparent 1px) 0 0 / 2px 2px; opacity: .4; }
.grip.wide { margin: 0 5px; }
.under1 { flex: none; width: 189px; }
.under2 { flex: none; width: 204px; }
.under3 { flex: none; width: 36px; }
.vsep { width: 1px; height: 18px; margin: 0 4px; background: #ccc; }
.dd { flex: none; width: 8px; height: 4px; margin: 0 2px; background: #444; clip-path: polygon(0 0, 100% 0, 50% 100%); }
.dd.pale { background: #999; }
.field { display: flex; align-items: center; height: 18px; border: 1px solid #b9b9b9; border-radius: 2px; background: #fff; position: relative; }
.field input, .field select { flex: 1; height: 100%; padding-left: 3px; width: 10px; }
.combo { background: linear-gradient(#fff, #eee); }
.tri { flex: none; width: 7px; height: 4px; margin: 0 6px; background: #555; clip-path: polygon(0 0, 100% 0, 50% 100%); }
.arrows { flex: none; width: 12px; height: 100%; border-left: 1px solid #c4c4c4; display: flex; flex-direction: column; align-items: center; justify-content: center; gap: 3px; }
.arrows::before, .arrows::after { content: ""; width: 6px; height: 4px; background: #555; clip-path: polygon(50% 0, 100% 100%, 0 100%); }
.arrows::after { clip-path: polygon(0 0, 100% 0, 50% 100%); }
.snap { width: 65px; margin-left: 1px; color: #777; background: #f3f3f3; }
.unit { width: 71px; margin-right: 1px; color: #777; }
.unit .tri, .snap .arrows::before, .snap .arrows::after { background: #888; }
.bar .field { font: 9px/12px "DejaVu Sans Condensed", Roboto, sans-serif; }

.body { flex: 1; display: flex; min-height: 0; }
.dock { flex: none; width: 214px; margin-right: 4px; display: flex; flex-direction: column; }
.dock header { display: flex; align-items: center; height: 14px; padding: 0 2px 0 3px; gap: 2px; }
.dock h2 { flex: 1; font: inherit; }
.win { width: 8px; height: 8px; border: 1px solid #777; border-radius: 2px; font-size: 7px; line-height: 6px; text-align: center; color: #333; }
.ptools { display: flex; align-items: center; gap: 6px; height: 20px; padding-left: 5px; }
.ptools svg { width: 12px; height: 12px; }
.dock .treebox { display: grid; grid-template-columns: 1fr 12px; grid-template-rows: 166px 12px; border: 1px solid #bbb; background: #fff; }
.tree { display: grid; grid-template-rows: repeat(11, 1fr); height: 172px; overflow: hidden; clip-path: inset(0 0 6px 0); min-width: 0; }
.tree li { display: flex; align-items: center; gap: 5px; white-space: nowrap; padding-left: 5px; min-width: 0; }
.tree li.l1 { padding-left: 22px; gap: 4px; }
.tree li.l2 { padding-left: 41px; }
.tree li.on { background: #efefef; }
.tree svg { flex: none; width: 14px; height: 14px; }
.arrow { flex: none; width: 8px; height: 8px; }
.arrow.r { background: #555; clip-path: polygon(20% 10%, 75% 50%, 20% 90%); }
.arrow.d { background: #555; clip-path: polygon(5% 25%, 95% 25%, 50% 80%); }
.vs { display: flex; flex-direction: column; background: #e2e2e2; border-left: 1px solid #c9c9c9; align-items: center; }
.vs b { width: 100%; height: 52px; margin: 16px 0 auto; background: #f8f8f8; border: 1px solid #d0d0d0; border-width: 1px 0; }
.up, .dn { width: 7px; height: 4px; margin: 4px 0; background: #555; clip-path: polygon(50% 0, 100% 100%, 0 100%); }
.dn { clip-path: polygon(0 0, 100% 0, 50% 100%); }
.hs { display: flex; align-items: center; border-top: 1px solid #c9c9c9; background: #eee; grid-column: 1 / 3; padding-right: 12px; }
.hs b { flex: 1; height: 100%; background: #fafafa; border: 1px solid #d0d0d0; border-width: 0 1px; }
.lf, .rt { width: 4px; height: 7px; margin: 0 4px; background: #333; clip-path: polygon(100% 0, 100% 100%, 0 50%); }
.rt { clip-path: polygon(0 0, 100% 50%, 0 100%); }
.hgrip { height: 6px; line-height: 4px; text-align: center; color: #aaa; }
.layerbox { flex: 1; background: #fff; border: 1px solid #bbb; }
.layers { display: grid; grid-template-rows: repeat(9, 1fr); height: 140px; }
.layers li { display: flex; align-items: center; color: #777; font-weight: 700; font-style: italic; padding-left: 4px; }
.layers li.lit { color: #000; font-style: normal; }
.layers li span { flex: 1; padding-left: 4px; height: 100%; }
.layers li.cur span { background: #eaf4fd; box-shadow: inset 0 0 0 1px #a9cbe8; text-decoration: underline; }
.layers input { margin: 0 4px 0 7px; }
input[type="checkbox"] { appearance: none; flex: none; width: 13px; height: 13px; border: 1px solid #bbb; border-radius: 1px; background: #fff; display: grid; place-items: center; }
input[type="checkbox"]:checked::after { content: ""; width: 9px; height: 9px; background: #000; clip-path: polygon(0 45%, 20% 35%, 38% 65%, 75% 0, 100% 0, 45% 100%, 32% 100%); }
.ck.off input { background: #efefef; }
.sw { flex: none; width: 13px; height: 13px; border: 1px solid #8888; }
svg.sw { border: 0; }
.sw.river { height: 2px; border: 0; background: #8fd0f8; }
.c1 { background: #ffa912; } .c2 { background: #ff2; } .c3 { background: #38b3ff; } .c4 { background: #b7484b; }
.c5 { background: #e77148; } .c6 { background: #987db7; } .c7 { background: #bed050; }
.map { flex: 1; position: relative; background: #fff; border: 1px solid #b4b4b4; overflow: hidden; }
.map svg { position: absolute; inset: 0; width: 100%; height: 100%; }

.status { flex: none; display: flex; align-items: center; height: 21px; padding: 0 6px 0 3px; font: 9px/12px "DejaVu Sans Condensed", Roboto, sans-serif; }
.status .field { height: 17px; }
.locate { width: 164px; font: 9px/12px "Noto Sans", sans-serif; }
.locate svg { width: 9px; height: 9px; margin: 0 3px 0 5px; }
.locate input::placeholder { color: #777; }
.push { flex: 1; }
.status label + .field { margin-left: 2px; }
.coord { width: 77px; } .scale { width: 66px; } .mag { width: 65px; } .rot { width: 62px; }
.sic { width: 13px; height: 13px; margin: 0 9px 0 4px; }
.sic.lock { margin: 0 6px 0 8px; }
.status .mag { margin-right: 7px; } .status .rot { margin-right: 5px; }
.crs { display: flex; align-items: center; margin-left: 8px; }
.crs .sic { margin-right: 3px; }
.crs + .sic { margin: 0 0 0 14px; }
.ck { display: flex; align-items: center; gap: 4px; }

.menu { position: absolute; display: grid; background: #fff; border: 1px solid #a5a5a5; box-shadow: 2px 2px 2px #0007; }
.menu button { display: flex; align-items: center; text-align: left; position: relative; white-space: nowrap; }
.menu .on { background: #0078d7; color: #e6f1fb; }
.menu .on .arrow { background: #9cf; }
.vector { left: 239px; top: 42px; width: 207px; height: 140px; grid-auto-rows: 1fr; }
.vector button { padding: 0 2px 0 23px; }
.vector svg { position: absolute; left: 4px; width: 15px; height: 15px; }
.vector span { flex: 1; }
.geo { left: 445px; top: 81px; width: 220px; height: 180px; grid-auto-rows: 1fr; }
.geo button { padding-left: 5px; gap: 4px; }
.geo svg { width: 13px; height: 13px; }
.mark { outline: 2px solid #f00; outline-offset: -1px; border-radius: 0; }
.badge, .nums b { width: 32px; height: 32px; border-radius: 50%; background: #f00; color: #fff; font: 23px/32px Lato, sans-serif; text-align: center; }
.badge { position: absolute; z-index: 2; }
.geo .badge { right: -17px; top: -6px; }

.dialog { position: absolute; left: 482px; top: 158px; width: 745px; border: 1px solid #000; background: #f0f0f0; font: 9px/12px "DejaVu Sans Condensed", Roboto, sans-serif; box-shadow: 6px 6px 12px -2px #0005; }
.title { display: flex; align-items: center; gap: 5px; height: 26px; padding: 0 10px 0 6px; background: #fff; font: 10px/14px "Noto Sans", sans-serif; }
.title > svg { width: 14px; height: 14px; }
.title span { flex: 1; }
.title button svg { display: block; width: 10px; height: 10px; }
.cols { display: flex; padding: 10px 9px 0 8px; height: 372px; }
.left { flex: 1; display: flex; flex-direction: column; }
.tabs { display: flex; align-items: flex-end; height: 21px; }
.tabs button { height: 19px; padding: 0 10px; border: 1px solid #bdbdbd; border-bottom: 0; background: #e6e6e6; border-radius: 2px 2px 0 0; }
.tabs .on { height: 22px; background: #fff; margin-bottom: -1px; position: relative; }
.pane { flex: 1; display: flex; border: 1px solid #bdbdbd; }
.form { flex: 1; display: flex; flex-direction: column; padding: 2px 1px 0 3px; min-width: 0; }
.lb { height: 12px; margin: 1px 0 4px; }
.lb.seg { margin-top: 5px; }
.form > .row { display: flex; align-items: center; gap: 6px; }
.form .field { height: 18px; }
.grow { flex: 1; }
.form > .field { margin: 0 2px 4px 0; }
.form .input { margin-bottom: 3px; }
.form .input .field { height: 23px; }
.combo > svg { width: 14px; height: 14px; margin-left: 4px; }
.input select { padding-left: 2px; }
.ric { width: 19px; height: 19px; margin: 0 1px; }
.more { position: relative; flex: none; width: 21px; height: 17px; border: 1px solid #b5b5b5; border-radius: 2px; background: linear-gradient(#fff, #eee); text-align: left; padding-left: 4px; }
.more .tri { position: absolute; right: 2px; bottom: 3px; margin: 0; width: 6px; }
.more.mark { outline-offset: 1px; border-radius: 0; }
.ov svg { display: block; width: 18px; height: 16px; }
.row .ov.more { padding-left: 2px; width: 23px; height: 20px; margin-left: -2px; border-color: #4a9fe0; }
.input .badge { right: 15px; top: -6px; }
.ck.off { color: #888; margin-bottom: 5px; }
.meters { width: 67px; }
.dis { position: relative; width: 90px; height: 20px; margin: 0 0 1px -7px; padding-left: 7px; white-space: nowrap; }
.dis .badge { right: -29px; top: -6px; }
.row .more .badge { left: 17px; top: 1px; }
.clear { width: 10px; height: 8px; margin-right: 4px; }
.form > .ck:last-child { margin-top: 6px; }
.vs.tall { width: 13px; background: #fafafa; }
.vs.tall b { margin-top: 0; height: 290px; }
.fold { width: 4px; height: 6px; margin: 2px 5px 0 3px; background: #444; clip-path: polygon(100% 0, 100% 100%, 0 50%); }
.help { width: 184px; background: #fff; border: 1px solid #c4c4c4; padding: 2px 0 0 3px; color: #6a6a6a; white-space: nowrap; overflow: hidden; }
.help h1 { font: 700 15px/19px "Noto Sans", sans-serif; color: #444; margin-bottom: 7px; }
.help p { line-height: 12px; margin-bottom: 7px; }
.actions { display: grid; grid-template-columns: 1fr 58px; gap: 4px; padding: 20px 9px 9px 8px; }
.progress { border: 1px solid #b9b9b9; border-radius: 2px; background: #fff; text-align: center; line-height: 16px; }
.line2 { display: flex; gap: 4px; }
.btn { position: relative; width: 58px; height: 19px; border: 1px solid #b5b5b5; border-radius: 2px; background: linear-gradient(#fff, #ececec); }
.btn.auto { width: auto; padding: 0 3px; }
.btn:disabled { color: #888; }
.run.mark { border-radius: 0; }
.run .badge { right: -14px; top: 13px; }

.ctx { left: 982px; top: 317px; width: 214px; grid-auto-rows: auto; }
.ctx em, .ctx button { height: 20px; line-height: 20px; padding-left: 23px; }
.ctx em { color: #777; }
.ctx em.gap { margin-top: 2px; }
.ctx span { flex: 1; }
.ctx hr { width: 204px; margin: 0 4px; border: 0; height: 1px; background: #d0d0d0; }
.ctx .strong { font-weight: 700; }
.ctx .arrow { margin-right: 2px; }
.box { position: absolute; left: 5px; width: 13px; height: 13px; background: #fff; border: 1px solid #ccc; }
.sub { left: 1196px; top: 379px; width: 143px; grid-auto-rows: 20px; box-shadow: none; border-color: #a5a5a5 #ddd #fff #fff; }
.sub button { gap: 12px; padding-left: 21px; }
.sub .badge { right: -15px; top: -6px; }

.legend { position: absolute; left: 760px; top: 0; width: 593px; height: 197px; display: flex; background: linear-gradient(90deg, transparent 29px, #ffffffd9 29px); color: #111; }
.nums { display: flex; flex-direction: column; justify-content: space-between; height: 194px; }
.nums b { font-weight: 400; }
.badge { font-weight: 400; }
.texts { padding: 4px 0 0 7px; font: 22px/31px "Noto Sans", sans-serif; white-space: nowrap; }
</style>
